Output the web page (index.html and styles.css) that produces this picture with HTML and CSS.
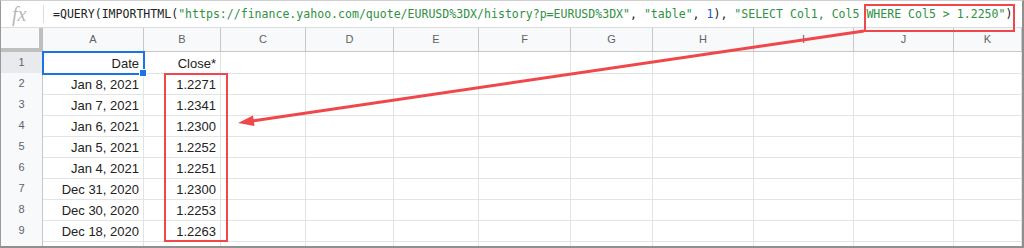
FILE: index.html
```html
<!DOCTYPE html>
<html>
<head>
  <meta charset="UTF-8">
  <title>IMPORTHTML query</title>
  <link rel="stylesheet" href="styles.css">
</head>
<body>
  <div class="frame">
    <div class="formula-bar">
      <span class="fx">fx</span>
      <span class="sep"></span>
      <span class="formula">=QUERY(IMPORTHTML(<span class="str">"https://finance.yahoo.com/quote/EURUSD%3DX/history?p=EURUSD%3DX"</span>, <span class="str">"table"</span>, <span class="num">1</span>), <span class="str">"SELECT Col1, Col5 WHERE Col5 &gt; 1.2250"</span>)</span>
    </div>

    <div class="sheet">
      <div class="row head">
        <div class="corner"></div>
        <div class="active">A</div><div>B</div><div>C</div><div>D</div><div>E</div><div>F</div><div>G</div><div>H</div><div>I</div><div>J</div><div>K</div>
      </div>
      <div class="row">
        <div class="rh active">1</div>
        <div class="c sel">Date</div><div class="c">Close*</div><div></div><div></div><div></div><div></div><div></div><div></div><div></div><div></div><div></div>
      </div>
      <div class="row">
        <div class="rh">2</div>
        <div class="c">Jan 8, 2021</div><div class="c">1.2271</div><div></div><div></div><div></div><div></div><div></div><div></div><div></div><div></div><div></div>
      </div>
      <div class="row">
        <div class="rh">3</div>
        <div class="c">Jan 7, 2021</div><div class="c">1.2341</div><div></div><div></div><div></div><div></div><div></div><div></div><div></div><div></div><div></div>
      </div>
      <div class="row">
        <div class="rh">4</div>
        <div class="c">Jan 6, 2021</div><div class="c">1.2300</div><div></div><div></div><div></div><div></div><div></div><div></div><div></div><div></div><div></div>
      </div>
      <div class="row">
        <div class="rh">5</div>
        <div class="c">Jan 5, 2021</div><div class="c">1.2252</div><div></div><div></div><div></div><div></div><div></div><div></div><div></div><div></div><div></div>
      </div>
      <div class="row">
        <div class="rh">6</div>
        <div class="c">Jan 4, 2021</div><div class="c">1.2251</div><div></div><div></div><div></div><div></div><div></div><div></div><div></div><div></div><div></div>
      </div>
      <div class="row">
        <div class="rh">7</div>
        <div class="c">Dec 31, 2020</div><div class="c">1.2300</div><div></div><div></div><div></div><div></div><div></div><div></div><div></div><div></div><div></div>
      </div>
      <div class="row">
        <div class="rh">8</div>
        <div class="c">Dec 30, 2020</div><div class="c">1.2253</div><div></div><div></div><div></div><div></div><div></div><div></div><div></div><div></div><div></div>
      </div>
      <div class="row">
        <div class="rh">9</div>
        <div class="c">Dec 18, 2020</div><div class="c">1.2263</div><div></div><div></div><div></div><div></div><div></div><div></div><div></div><div></div><div></div>
      </div>
      <div class="row">
        <div class="rh">10</div>
        <div></div><div></div><div></div><div></div><div></div><div></div><div></div><div></div><div></div><div></div><div></div>
      </div>
    </div>

    <!-- annotation drawn over the sheet -->
    <svg class="marks" width="1024" height="248" viewBox="0 0 1024 248">
      <rect x="865" y="5" width="149" height="26" fill="none" stroke="#f0474b" stroke-width="2"/>
      <rect x="165" y="74" width="62" height="167" fill="none" stroke="#f0474b" stroke-width="2"/>
      <line x1="864" y1="31" x2="252" y2="121" stroke="#f0474b" stroke-width="3"/>
      <polygon points="238,123 254.5,126 253,115.5" fill="#f0474b"/>
    </svg>
  </div>
</body>
</html>
```

FILE: styles.css
```css
body {
  margin: 0;
  font-family: "Liberation Sans", Arial, sans-serif;
  background: #fff;
}
.frame {
  position: relative;
  width: 1024px;
  height: 248px;
  box-sizing: border-box;
  border-top: 1px solid #d0d0d0;
  border-left: 1px solid #9a9a9a;
  border-right: 2px solid #8f8f8f;
  border-bottom: 2px solid #8f8f8f;
  overflow: hidden;
}
.formula-bar {
  height: 26px;
  border-bottom: 1px solid #dadce0;
  display: flex;
  align-items: center;
}
.fx {
  width: 42px;
  padding-left: 11px;
  box-sizing: border-box;
  font-family: "Liberation Serif", serif;
  font-style: italic;
  font-size: 20px;
  color: #b8b8b8;
  line-height: 26px;
}
.sep {
  width: 1px;
  height: 18px;
  background: #dadce0;
  margin-right: 9px;
}
.formula {
  font-family: "DejaVu Sans Mono", "Liberation Mono", monospace;
  font-size: 11.55px;
  color: #222;
  white-space: nowrap;
  line-height: 26px;
}
.str {
  color: #2f9142;
}
.num {
  color: #1a56c4;
}
.row {
  display: grid;
  grid-template-columns: 42px 101px 77px 85px 88px 85px 92px 82px 101px 100px 100px 1fr;
  height: 21px;
}
.row > div {
  box-sizing: border-box;
  border-right: 1px solid #e2e3e3;
  border-bottom: 1px solid #e2e3e3;
}
.row.head {
  height: 24px;
}
.row.head > div {
  background: #f8f9fa;
  border-right-color: #c7c7c7;
  border-bottom-color: #c7c7c7;
  color: #5f6368;
  font-size: 11px;
  text-align: center;
  line-height: 23px;
}
.row.head > .corner {
  border-right: 4px solid #bfbfbf;
  border-bottom: 4px solid #bfbfbf;
}
.row > .rh {
  background: #f8f9fa;
  border-right-color: #c7c7c7;
  border-bottom-color: #c7c7c7;
  color: #5f6368;
  font-size: 11px;
  text-align: center;
  line-height: 20px;
}
.row > .active {
  background: #e8eaed;
}
.c {
  font-size: 13px;
  color: #222;
  text-align: right;
  padding: 2px 4px 0;
  line-height: 19px;
  white-space: nowrap;
}
.c.sel {
  position: relative;
  z-index: 1;
  outline: 2px solid #1a73e8;
  outline-offset: -1px;
}
.c.sel::after {
  content: "";
  position: absolute;
  right: -4px;
  bottom: -4px;
  width: 6px;
  height: 6px;
  background: #1a73e8;
  border: 1px solid #fff;
}
.marks {
  position: absolute;
  left: -1px;
  top: -1px;
  z-index: 2;
}
```
